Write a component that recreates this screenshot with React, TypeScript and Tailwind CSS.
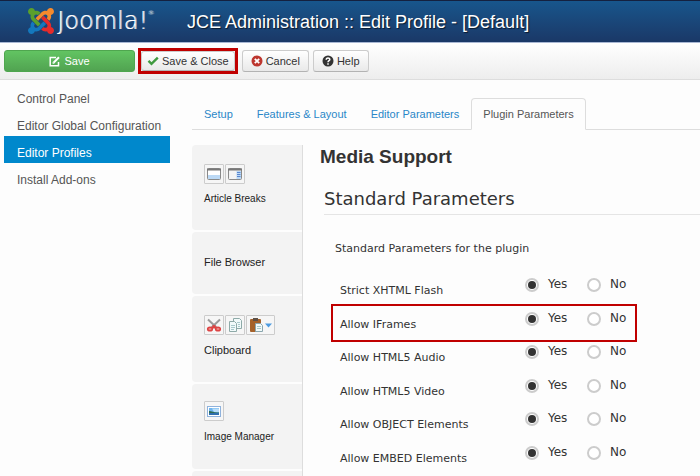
import type { ReactNode } from 'react'

const NAV = ['Control Panel', 'Editor Global Configuration', 'Editor Profiles', 'Install Add-ons']
const TABS = ['Setup', 'Features & Layout', 'Editor Parameters', 'Plugin Parameters']

const PARAMS = [
  { id: 'xhtml', label: 'Strict XHTML Flash' },
  { id: 'iframes', label: 'Allow IFrames', highlighted: true },
  { id: 'audio', label: 'Allow HTML5 Audio' },
  { id: 'video', label: 'Allow HTML5 Video' },
  { id: 'object', label: 'Allow OBJECT Elements' },
  { id: 'embed', label: 'Allow EMBED Elements' },
]

export default function App() {
  return (
    <div className="flex min-h-screen flex-col bg-[#fdfdfd] font-['Liberation_Sans',Arial,sans-serif] text-[11px] text-[#333]">
      <Header />
      <Toolbar />
      <div className="flex flex-1">
        <Sidebar />
        <main className="ml-[22px] flex min-w-0 flex-1 flex-col pt-[18px]">
          <Tabs />
          <div className="mt-[15px] flex flex-1">
            <PluginList />
            <MediaSupport />
          </div>
        </main>
      </div>
    </div>
  )
}

function Header() {
  return (
    <header className="flex h-[43px] items-center border-t border-b border-t-[#14213f] border-b-[#a9b8d4] bg-linear-to-b from-[#17568c] to-[#1a3867] pl-7 text-white">
      <a href="#home" className="flex w-[159px] shrink-0 items-center gap-[3px] pb-[2px]">
        <JoomlaMark />
        <span className="flex items-start font-['DejaVu_Sans',Verdana,sans-serif] text-2xl leading-7 font-extralight [text-shadow:1px_0_0_#fffa]">
          Joomla!
          <span className="text-[6px] leading-3">®</span>
        </span>
      </a>
      <h1 className="text-lg leading-6 whitespace-nowrap [text-shadow:1px_1px_1px_#0009]">
        JCE Administration :: Edit Profile - [Default]
      </h1>
    </header>
  )
}

function Toolbar() {
  return (
    <div className="flex h-[37px] items-center gap-1 border-b border-[#ddd] bg-linear-to-b from-white to-[#ededed] px-1">
      <button
        type="button"
        className="flex h-[22px] w-[131px] items-center justify-center gap-1 rounded-[3px] border border-[#4fa64f] bg-linear-to-b from-[#62c462] to-[#51a351] text-white"
      >
        <EditIcon />
        Save
      </button>
      <div className="-ml-px border-[3px] border-[#c00000]">
        <ToolButton size="h-5 px-[5px]">
          <svg width="12" height="12" viewBox="0 0 12 12" fill="none" stroke="#3f9a3f" strokeWidth="2.4" aria-hidden="true">
            <path d="M1.5 5.8l3 3L10.8 2.6" />
          </svg>
          Save &amp; Close
        </ToolButton>
      </div>
      <ToolButton>
        <svg width="12" height="12" viewBox="0 0 12 12" aria-hidden="true">
          <circle cx="6" cy="6" r="5.5" fill="#bd362f" />
          <path d="M3.8 3.8l4.4 4.4M8.2 3.8L3.8 8.2" stroke="#fff" strokeWidth="1.8" />
        </svg>
        Cancel
      </ToolButton>
      <ToolButton>
        <svg width="12" height="12" viewBox="0 0 12 12" aria-hidden="true">
          <circle cx="6" cy="6" r="5.5" fill="#333" />
          <path d="M4.2 4.7c0-2.4 3.7-2.3 3.6-.2C7.8 5.7 6 5.6 6 7.2M6 8.2v1.5" fill="none" stroke="#fff" strokeWidth="1.5" />
        </svg>
        Help
      </ToolButton>
    </div>
  )
}

function ToolButton({ size = 'h-[22px] px-2', children }: { size?: string; children: ReactNode }) {
  return (
    <button
      type="button"
      className={`flex items-center gap-[3px] rounded-[3px] border border-[#ccc] border-b-[#b3b3b3] bg-linear-to-b from-white to-[#e9e9e9] whitespace-nowrap ${size}`}
    >
      {children}
    </button>
  )
}

function Sidebar() {
  return (
    <nav className="w-[170px] shrink-0 pt-[2px] pl-1 text-xs">
      <ul>
        {NAV.map((item) => (
          <li key={item}>
            <a
              href="#nav"
              className={`block pt-[9px] pb-[2px] pl-[13px] leading-4 whitespace-nowrap ${
                item === 'Editor Profiles' ? 'bg-[#0088cc] text-white' : 'text-[#555]'
              }`}
            >
              {item}
            </a>
          </li>
        ))}
      </ul>
    </nav>
  )
}

function Tabs() {
  return (
    <div role="tablist" className="flex border-b border-[#ddd] text-[#2a87c8]">
      {TABS.map((tab) => (
        <button
          key={tab}
          type="button"
          role="tab"
          aria-selected={tab === 'Plugin Parameters'}
          className="-mb-px h-8 rounded-t-[4px] border border-transparent px-[11px] whitespace-nowrap aria-selected:border-[#ddd] aria-selected:border-b-[#fdfdfd] aria-selected:bg-[#fdfdfd] aria-selected:text-[#555]"
        >
          {tab}
        </button>
      ))}
    </div>
  )
}

function PluginList() {
  return (
    <ul className="flex w-[111px] shrink-0 flex-col gap-[2px] border-r border-[#ddd] leading-4 text-[#222]">
      <li className="h-[85px] rounded-l-[4px] bg-[#f3f3f3] pt-[19px] pl-3">
        <div className="flex gap-px">
          <IconTile><PageBreakIcon /></IconTile>
          <IconTile><ReadMoreIcon /></IconTile>
        </div>
        <p className="mt-[7px] text-[10px]">Article Breaks</p>
      </li>
      <li className="h-[62px] rounded-l-[4px] bg-[#f3f3f3] pt-[22px] pl-3">File Browser</li>
      <li className="h-[86px] rounded-l-[4px] bg-[#f3f3f3] pt-[19px] pl-3">
        <div className="flex gap-px">
          <IconTile><CutIcon /></IconTile>
          <IconTile><CopyIcon /></IconTile>
          <IconTile>
            <PasteIcon />
            <svg width="7" height="5" viewBox="0 0 7 5" className="mx-px" aria-hidden="true">
              <path d="M0 .5h7L3.5 4.5z" fill="#4d9be0" />
            </svg>
          </IconTile>
        </div>
        <p className="mt-[7px]">Clipboard</p>
      </li>
      <li className="h-[85px] rounded-l-[4px] bg-[#f3f3f3] pt-[17px] pl-3">
        <IconTile><ImageIcon /></IconTile>
        <p className="mt-2 text-[10px]">Image Manager</p>
      </li>
      <li className="flex-1 rounded-tl-[4px] bg-[#f3f3f3]" />
    </ul>
  )
}

function IconTile({ children }: { children: ReactNode }) {
  return (
    <span className="flex h-5 w-fit items-center rounded-[1px] border border-[#ccc] bg-[#f6f6f6] px-px">
      {children}
    </span>
  )
}

function MediaSupport() {
  return (
    <section className="min-w-0 flex-1 pl-[17px]">
      <h2 className="text-[19px] leading-6 font-bold">Media Support</h2>
      <div className="font-['DejaVu_Sans',Verdana,sans-serif]">
        <h3 className="mt-[18px] ml-1 border-b border-[#e5e5e5] pb-[3px] text-lg leading-6">Standard Parameters</h3>
        <p className="mt-[26px] ml-[15px] leading-4">Standard Parameters for the plugin</p>
        <div className="mt-[14px] ml-[11px]">
          {PARAMS.map((param) => (
            <ParamRow key={param.id} {...param} />
          ))}
        </div>
      </div>
    </section>
  )
}

function ParamRow({ id, label, highlighted }: { id: string; label: string; highlighted?: boolean }) {
  return (
    <div role="radiogroup" aria-labelledby={id} className="relative flex leading-4 odd:h-[34px] even:h-[33px]">
      <span id={id} className="w-[194px] shrink-0 pt-3 pl-[9px]">
        {label}
      </span>
      <label className="flex w-[62px] items-start pt-[5px] text-xs leading-4">
        <Radio name={id} checked />
        Yes
      </label>
      <label className="flex items-start pt-[5px] text-xs leading-4">
        <Radio name={id} />
        No
      </label>
      {highlighted && (
        <span className="pointer-events-none absolute -top-px left-0 h-[38px] w-[306px] border-2 border-[#c00000]" />
      )}
    </div>
  )
}

function Radio({ name, checked }: { name: string; checked?: boolean }) {
  return (
    <input
      type="radio"
      name={name}
      defaultChecked={checked}
      className="mt-[2px] mr-[9px] grid size-[14px] appearance-none place-content-center rounded-full border-2 border-[#ccc] bg-white before:size-2 before:rounded-full checked:before:bg-[#333]"
    />
  )
}

function JoomlaMark() {
  return (
    <svg width="26" height="26" viewBox="0 32 448 448" className="shrink-0" aria-hidden="true">
      <path
        fill="#5aa02c"
        d="M.6 92.1C.6 58.8 27.4 32 60.4 32c30 0 54.5 21.9 59.2 50.2 32.6-7.6 67.1.6 96.5 30l-44.3 44.3c-20.5-20.5-42.6-16.3-55.4-3.5-14.3 14.3-14.3 37.9 0 52.2l99.5 99.5-44 44.3c-87.7-87.2-49.7-49.7-99.8-99.7-26.8-26.5-35-64.8-24.8-98.9C20.4 144.6.6 120.7.6 92.1z"
      />
      <path
        fill="#f58a2c"
        d="M130.1 208.5l44.3 44.3c10-10 89.7-89.7 99.7-99.8 14.3-14.3 37.6-14.3 51.9 0 12.8 12.8 17 35-3.5 55.4l44 44.3c31.2-31.2 38.5-67.6 28.9-101.2 29.2-4.1 51.9-29.2 51.9-59.5 0-33.2-26.8-60.1-59.8-60.1-30.3 0-55.4 22.5-59.5 51.6-33.8-9.9-71.7-1.5-98.3 25.1-18.3 19.1-71.1 71.5-99.6 99.9z"
      />
      <path
        fill="#e52b2b"
        d="M396.4 360.7c8.2-32.7-.9-68.5-26.3-93.9-11.8-12.2 5 4.7-99.5-99.7l-44.3 44.3 99.7 99.7c14.3 14.3 14.3 37.6 0 51.9-12.8 12.8-35 17-55.4-3.5l-44 44.3c27.6 30.2 68 38.8 102.7 28 5.5 27.4 29.7 48.1 58.9 48.1 33 0 59.8-26.8 59.8-60.1 0-30.2-22.5-55-51.6-59.1z"
      />
      <path
        fill="#1478bd"
        d="M312.1 307.6l-44-44.3c-87 86.4-50.4 50.4-99.7 99.8-14.3 14.3-37.6 14.3-51.9 0-13.1-13.4-16.9-35.3 3.2-55.4l-44-44.3c-30.2 30.2-38 65.2-29.5 98.3-26.7 6-46.2 29.9-46.2 58.2C0 453.2 26.8 480 59.8 480c28.6 0 52.5-19.8 58.6-46.7 32.7 8.2 68.5-.6 94.2-26 32.1-32 12.2-12.4 99.5-99.7z"
      />
    </svg>
  )
}

function EditIcon() {
  return (
    <svg width="11" height="11" viewBox="0 0 11 11" fill="none" stroke="#fff" aria-hidden="true">
      <path d="M7 1.5H1.2v8.3h8.3V6" strokeWidth="1.5" />
      <path d="M4.5 6.8L10 1.2" strokeWidth="2" />
      <path d="M3.6 5.8v1.9h1.9z" fill="#fff" stroke="none" />
    </svg>
  )
}

function PageBreakIcon() {
  return (
    <svg width="16" height="16" viewBox="0 0 16 16" aria-hidden="true">
      <rect x="1.5" y="2.5" width="13" height="11" rx="1" fill="#fff" stroke="#8a8a8a" />
      <path d="M1 2.5h14v2H1z" fill="#777" />
      <path d="M2 9h12v4H2z" fill="#bcd9f5" />
    </svg>
  )
}

function ReadMoreIcon() {
  return (
    <svg width="16" height="16" viewBox="0 0 16 16" aria-hidden="true">
      <rect x="1.5" y="2.5" width="13" height="11" rx="1" fill="#f4f4f4" stroke="#8a8a8a" />
      <path d="M1 2.5h14v2H1z" fill="#777" />
      <path d="M9.5 5H14v8H9.5z" fill="#bcd9f5" />
      <path d="M10 6.5h3.5M10 8.5h3.5M10 10.5h3.5" stroke="#5a86d0" />
    </svg>
  )
}

function CutIcon() {
  return (
    <svg width="16" height="16" viewBox="0 0 16 16" fill="none" aria-hidden="true">
      <path d="M2 2.5l8.5 8M14 2.5l-8.5 8" stroke="#9a9a9a" strokeWidth="2" />
      <path d="M6.5 8.5l3.5 3M9.5 8.5L6 11.5" stroke="#dd4444" strokeWidth="2" />
      <ellipse cx="4" cy="12" rx="2.3" ry="1.8" fill="#ee8a86" stroke="#dd4444" strokeWidth="1.6" />
      <ellipse cx="12" cy="12" rx="2.3" ry="1.8" fill="#ee8a86" stroke="#dd4444" strokeWidth="1.6" />
    </svg>
  )
}

function CopyIcon() {
  return (
    <svg width="16" height="16" viewBox="0 0 16 16" stroke="#8eaaa8" aria-hidden="true">
      <path d="M6.5 1.5h6l2 2v8h-8z" fill="#f2fafa" />
      <path d="M2.5 4.5h5l2 2v8h-7z" fill="#f2fafa" />
      <path d="M4 8.5h4M4 10.5h4M4 12.5h3M10 5.5h3M11 7.5h2M11 9.5h2" stroke="#a9c9cc" />
    </svg>
  )
}

function PasteIcon() {
  return (
    <svg width="16" height="16" viewBox="0 0 16 16" aria-hidden="true">
      <rect x="2" y="2" width="11" height="13" rx="1" fill="#a5622b" />
      <path d="M5 1h5v3H5z" fill="#5e5147" />
      <path d="M7.5 6.5h5l2 2v6h-7z" fill="#f2fafa" stroke="#8aa6ae" />
      <path d="M9 9.5h4M9 11.5h4" stroke="#a9c9cc" />
    </svg>
  )
}

function ImageIcon() {
  return (
    <svg width="16" height="16" viewBox="0 0 16 16" aria-hidden="true">
      <rect x="1.5" y="3.5" width="13" height="10" fill="#fff" stroke="#8fb2dc" />
      <path d="M3 5h10v7H3z" fill="#6fb4ee" />
      <path d="M6 5.5h7v3.5H8z" fill="#b9defa" />
      <path d="M3 8c3 0 5 2 10 1.5V10H3z" fill="#2e6b50" />
      <path d="M3 10h10v2H3z" fill="#2f6fae" />
    </svg>
  )
}
